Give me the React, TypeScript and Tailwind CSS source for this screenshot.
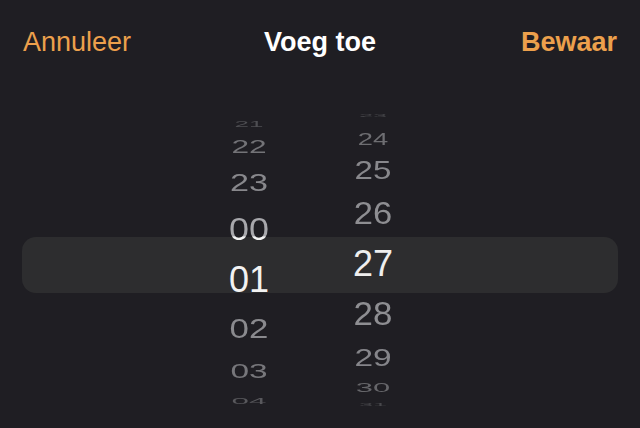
const hours = [
  { label: '21', h: 'h-[19px]', cls: 'scale-y-[0.23] scale-x-[0.72] text-[#4e4e52]' },
  { label: '22', h: 'h-[28px]', cls: 'scale-y-[0.5] scale-x-[0.88] text-[#737377]' },
  { label: '23', h: 'h-[44px]', cls: 'scale-y-[0.66] scale-x-[0.95] text-[#88888c]' },
  {
    label: '00',
    h: 'h-[49.75px]',
    cls: 'scale-y-[0.85] bg-[linear-gradient(to_bottom,#a8a8ac_70%,#f4f4f4_70%)] bg-clip-text text-transparent',
  },
  { label: '01', h: 'h-[50.5px]', cls: 'text-[#f2f2f2]' },
  { label: '02', h: 'h-[48px]', cls: 'scale-y-[0.78] scale-x-[0.97] text-[#8a8a8e]' },
  { label: '03', h: 'h-[35px]', cls: 'scale-y-[0.58] scale-x-[0.93] text-[#77777b]' },
  { label: '04', h: 'h-[26px]', cls: 'scale-y-[0.27] scale-x-[0.87] text-[#58585c]' },
];

const minutes = [
  { label: '23', h: 'h-[21px]', cls: 'scale-y-[0.12] scale-x-[0.7] text-[#48484c]' },
  { label: '24', h: 'h-[25px]', cls: 'scale-y-[0.46] scale-x-[0.76] text-[#6e6e72]' },
  { label: '25', h: 'h-[39px]', cls: 'scale-y-[0.7] scale-x-[0.92] text-[#88888c]' },
  { label: '26', h: 'h-[48px]', cls: 'scale-y-[0.85] scale-x-[0.96] text-[#8e8e92]' },
  { label: '27', h: 'h-[51.5px]', cls: 'text-[#eeeeee]' },
  { label: '28', h: 'h-[49px]', cls: 'scale-y-[0.92] scale-x-[0.97] text-[#8e8e92]' },
  { label: '29', h: 'h-[38px]', cls: 'scale-y-[0.65] scale-x-[0.93] text-[#85858a]' },
  { label: '30', h: 'h-[22px]', cls: 'scale-y-[0.35] scale-x-[0.86] text-[#66666a]' },
  { label: '31', h: 'h-[13px]', cls: 'scale-y-[0.1] scale-x-[0.7] text-[#48484c]' },
];

type Item = { label: string; h: string; cls: string };

function Column({ items, className }: { items: Item[]; className?: string }) {
  return (
    <div className={`flex w-[64px] flex-col items-center ${className ?? ''}`}>
      {items.map((it) => (
        <div key={it.label} className={`flex w-full items-center justify-center ${it.h}`}>
          <span className={`block text-[36px] leading-none ${it.cls}`}>{it.label}</span>
        </div>
      ))}
    </div>
  );
}

export default function App() {
  return (
    <div className="h-[428px] w-[640px] overflow-hidden bg-[#1f1e23] font-['Liberation_Sans',Arial,sans-serif]">
      {/* Header */}
      <div className="mt-[29px] grid h-[27px] grid-cols-3 items-center px-[23px] text-[27px] leading-none">
        <button className="justify-self-start text-[#eca04c]">Annuleer</button>
        <h1 className="justify-self-center font-bold text-white">Voeg toe</h1>
        <button className="justify-self-end font-bold text-[#eca04c]">Bewaar</button>
      </div>

      {/* Time picker */}
      <div className="relative mt-[50px] h-[310px]">
        <div className="absolute left-[22px] right-[22px] top-[131px] h-[56px] rounded-[14px] bg-[#2d2d2f]" />
        <div className="relative flex pl-[217px]">
          <Column items={hours} className="pt-[8px]" />
          <div className="w-[60px]" />
          <Column items={minutes} className="-mt-[1px]" />
        </div>
      </div>
    </div>
  );
}
